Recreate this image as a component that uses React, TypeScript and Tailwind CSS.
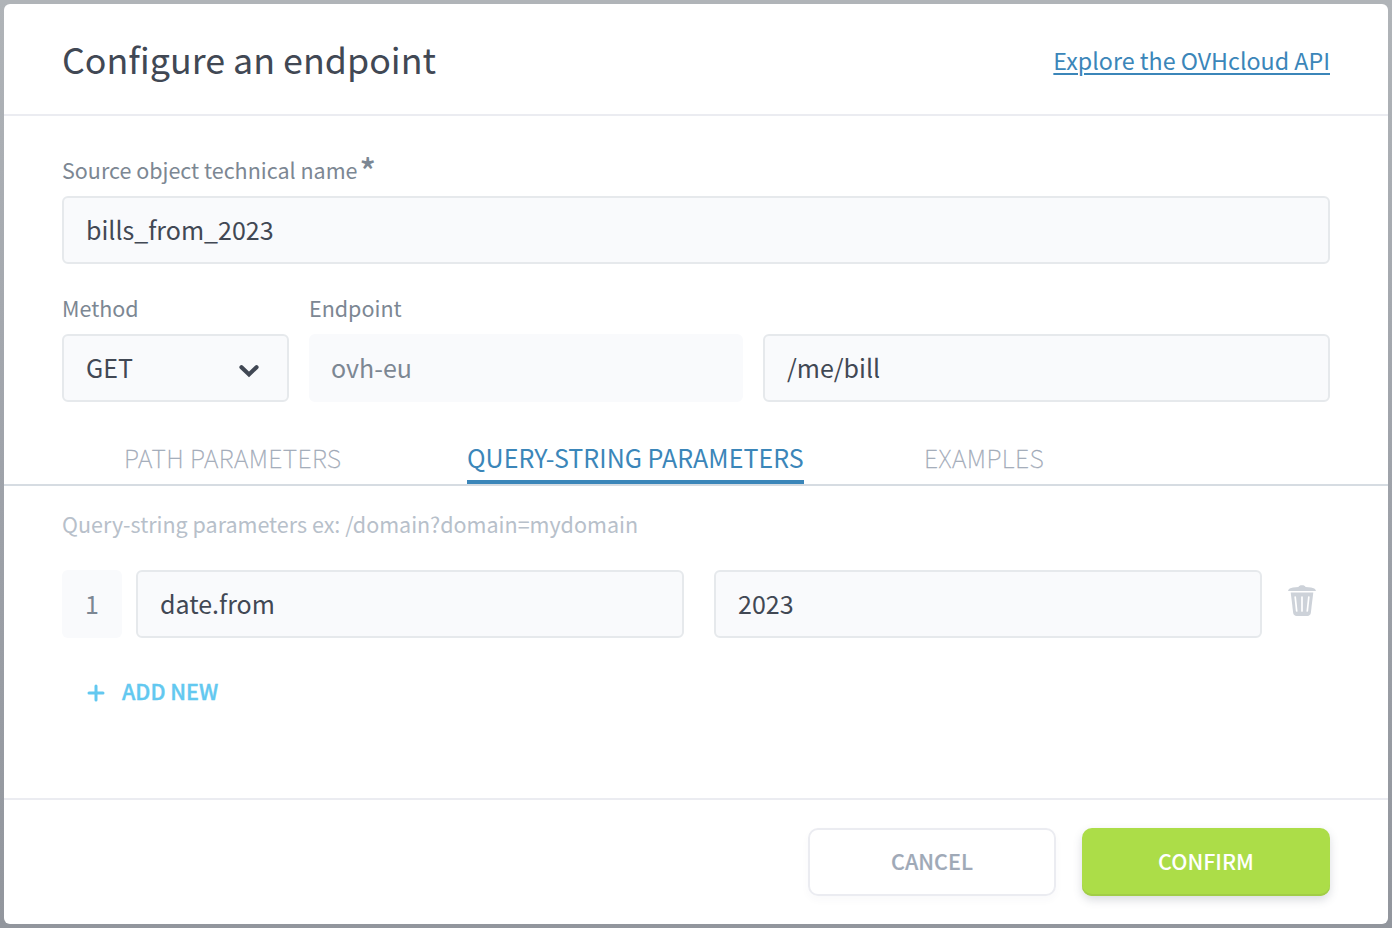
import React from "react";

const fieldBase =
  "flex h-[68px] items-center rounded-[6px] border-2 border-[#e6e9ec] bg-[#f9fafc] px-[22px] pb-[2px] text-[25px] leading-[36px] text-[#414854]";

function Field({ children, className = "" }: { children: React.ReactNode; className?: string }) {
  return (
    <div className={`${fieldBase} ${className}`}>
      {children}
    </div>
  );
}

function Label({ children }: { children: React.ReactNode }) {
  return <span className="block h-[50px] pt-[9px] text-[21.5px] leading-[30px] text-[#7c8793]">{children}</span>;
}

function Chevron() {
  return (
    <svg className="mt-[7px]" width="22" height="16" viewBox="0 0 22 16" fill="none">
      <path d="M3.500 4.200 11 11.400l7.500-7.200" stroke="#414854" strokeWidth="4.200" strokeLinecap="round" />
    </svg>
  );
}

function Trash() {
  return (
    <svg width="28" height="32" viewBox="0 0 28 32" fill="none">
      <path
        d="M0 6C.6 4 2.400 3 5 2.600l5.400-.5C11 .8 12 .2 14 .2s3 .6 3.600 1.900l5.400.5c2.600.400 4.400 1.400 5 3.400z"
        fill="#cdd2d9"
      />
      <path
        d="M2.700 7.500h22.600l-2.500 20.600c-.3 1.900-1.500 2.800-3.300 2.800H8.500c-1.800 0-3-.900-3.300-2.800z"
        fill="#cdd2d9"
      />
      <path d="M7.200 12l1.500 14M14 12v14M20.800 12l-1.500 14" stroke="#fff" strokeWidth="1.700" strokeLinecap="round" />
    </svg>
  );
}

function Plus() {
  return (
    <svg className="mt-[3px]" width="18" height="18" viewBox="0 0 18 18" fill="none">
      <path d="M9 2v14M2 9h14" stroke="#62c8f0" strokeWidth="3" strokeLinecap="round" />
    </svg>
  );
}

export default function App() {
  return (
    <div className="h-[928px] w-[1392px] overflow-hidden bg-gradient-to-b from-[#b0b4b8] via-[#9fa3aa] to-[#92969d] p-1 font-['Noto_Sans_CJK_SC','Noto_Sans',sans-serif]">
      <div className="flex h-[920px] flex-col rounded-[6px] bg-white">
        <header className="flex h-[112px] shrink-0 items-center justify-between border-b-2 border-[#ebecf1] px-[58px]">
          <h1 className="pb-[3px] text-[35.8px] leading-[52px] text-[#414854]">Configure an endpoint</h1>
          <a className="pt-[1px] text-[23.25px] leading-[34px] text-[#3b86b9] underline decoration-2 underline-offset-[3px]">
            Explore the OVHcloud API
          </a>
        </header>

        <main className="flex h-[682px] shrink-0 flex-col">
          <section className="px-[58px] pt-[30px]">
            <div className="flex">
              <Label>Source object technical name</Label>
              <span className="ml-[2px] text-[34px] font-medium leading-[47px] text-[#7c8793]">*</span>
            </div>
            <Field>bills_from_2023</Field>
            <div className="mt-[20px] flex gap-5">
              <div className="w-[227px]">
                <Label>Method</Label>
                <Field className="justify-between !pr-[27px]">
                  <span>GET</span>
                  <Chevron />
                </Field>
              </div>
              <div className="w-[434px]">
                <Label>Endpoint</Label>
                <Field className="!border-[#f9fafc] !pl-5 !text-[#7c8793]">ovh-eu</Field>
              </div>
              <div className="flex-1 pt-[50px]">
                <Field>/me/bill</Field>
              </div>
            </div>
          </section>

          <nav className="mt-[30px] flex h-[54px] shrink-0 border-b-2 border-[#d6dce2] pl-[120px] text-[25px] leading-[50px] text-[#9fa9b7]">
            <div className="w-[343px] font-thin tracking-[0.4px] [-webkit-text-stroke:0.3px_#9fa9b7]">
              PATH PARAMETERS
            </div>
            <div className="w-[337px] whitespace-nowrap border-b-4 border-[#3b86b9] tracking-[0.03px] text-[#3b86b9]">
              QUERY-STRING PARAMETERS
            </div>
            <div className="ml-[120px] font-thin tracking-[0.4px] [-webkit-text-stroke:0.3px_#9fa9b7]">EXAMPLES</div>
          </nav>

          <section className="px-[58px]">
            <p className="pt-[23px] text-[21.5px] leading-[30px] text-[#b7c0ca]">
              Query-string parameters ex: /domain?domain=mydomain
            </p>
            <div className="mt-[31px] flex items-center">
              <div className="flex h-[68px] w-[60px] items-center justify-center rounded-[6px] bg-[#f9fafc] text-[25px] text-[#7c8793]">
                1
              </div>
              <Field className="ml-[14px] w-[548px]">date.from</Field>
              <Field className="ml-[30px] w-[548px]">2023</Field>
              <button className="-mt-[6px] ml-[26px]" aria-label="Delete">
                <Trash />
              </button>
            </div>
            <button className="ml-[25px] mt-[37px] flex items-center gap-[17px] text-[21.5px] font-medium leading-[32px] text-[#62c8f0]">
              <Plus />
              <span className="[-webkit-text-stroke:0.4px_#62c8f0]">ADD NEW</span>
            </button>
          </section>
        </main>

        <footer className="flex flex-1 justify-end gap-[26px] border-t-2 border-[#ebecf1] px-[58px] pt-[28px] text-[21.5px] font-medium">
          <button className="h-[68px] w-[248px] rounded-[10px] border-2 border-[#ebecf1] pb-[2px] text-[#9fa9b7] shadow-[0_4px_8px_rgba(60,70,90,0.03)] [-webkit-text-stroke:0.2px_#9fa9b7]">
            CANCEL
          </button>
          <button className="h-[68px] w-[248px] rounded-[10px] bg-[#acdd48] pb-[2px] text-white shadow-[inset_0_-2px_0_#a1cd47,0_4px_10px_rgba(70,80,100,0.2)]">
            CONFIRM
          </button>
        </footer>
      </div>
    </div>
  );
}
